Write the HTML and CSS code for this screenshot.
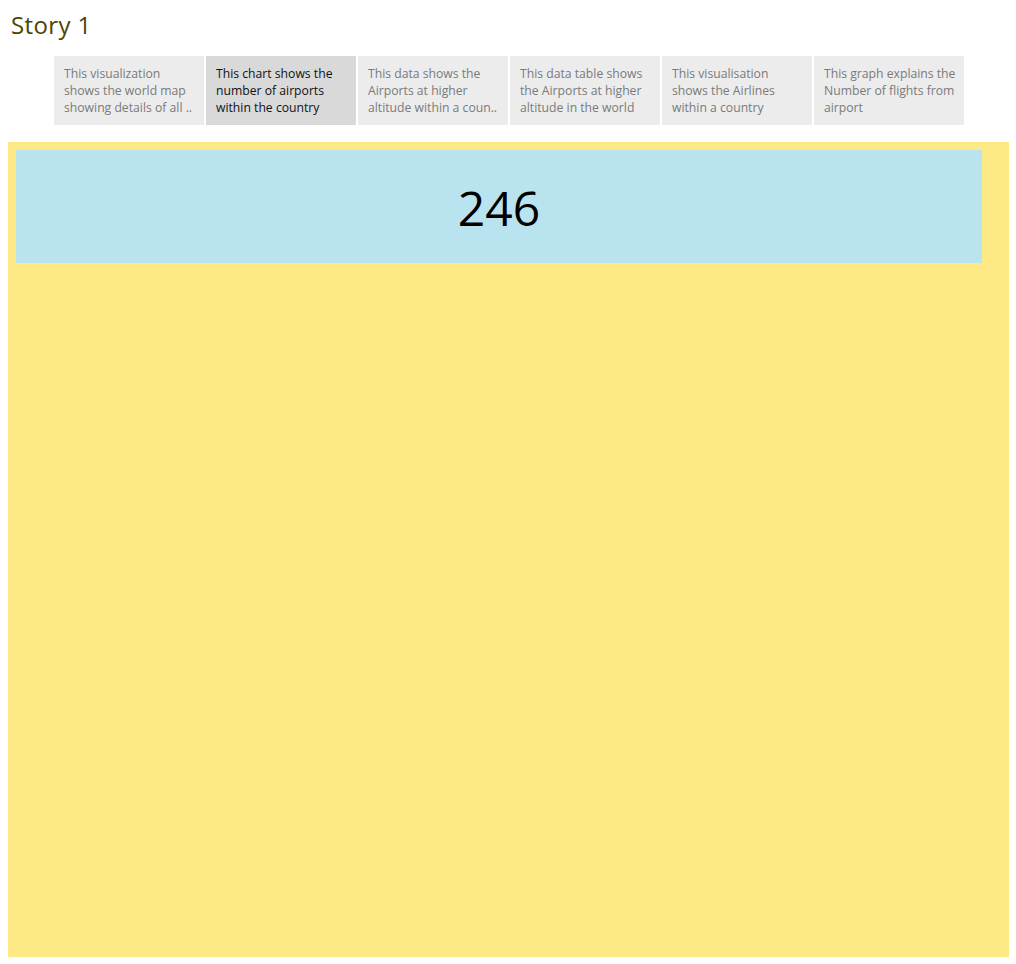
FILE: index.html
```html
<!DOCTYPE html>
<html>
<head>
<meta charset="utf-8">
<link rel="stylesheet" href="styles.css">
</head>
<body>
<div class="page">
  <h1 class="title">Story 1</h1>
  <div class="tabs">
    <div class="tab">This visualization<br>shows the world map<br>showing details of all ..</div>
    <div class="tab active">This chart shows the<br>number of airports<br>within the country</div>
    <div class="tab">This data shows the<br>Airports at higher<br>altitude within a coun..</div>
    <div class="tab">This data table shows<br>the Airports at higher<br>altitude in the world</div>
    <div class="tab">This visualisation<br>shows the Airlines<br>within a country</div>
    <div class="tab">This graph explains the<br>Number of flights from<br>airport</div>
  </div>
  <div class="board">
    <div class="kpi">246</div>
  </div>
</div>
</body>
</html>
```
FILE: styles.css
```css
html, body {
  margin: 0;
  padding: 0;
  background: #ffffff;
}
.page {
  width: 1016px;
  height: 964px;
  font-family: "Open Sans", "Noto Sans", sans-serif;
}
.title {
  margin: 0;
  padding: 10px 0 0 11px;
  height: 56px;
  box-sizing: border-box;
  font-size: 24px;
  font-weight: 400;
  line-height: 30px;
  letter-spacing: 0.4px;
  color: #4d4500;
}
.tabs {
  display: flex;
  gap: 2px;
  margin-left: 54px;
  height: 69px;
}
.tab {
  width: 150px;
  box-sizing: border-box;
  padding: 9px 0 0 10px;
  background: #ececec;
  color: #7a7a7a;
  font-size: 12.2px;
  line-height: 17px;
  white-space: nowrap;
  overflow: hidden;
}
.tab.active {
  background: #d9d9d9;
  color: #111111;
}
.board {
  margin: 17px 0 0 8px;
  width: 1001px;
  height: 815px;
  background: #fee987;
  padding: 8px;
  box-sizing: border-box;
}
.kpi {
  width: 966px;
  height: 113px;
  background: #bae3f0;
  display: flex;
  justify-content: center;
  align-items: center;
  font-size: 48px;
  color: #000000;
  font-weight: 400;
  padding-top: 2px;
  box-sizing: border-box;
}
```
